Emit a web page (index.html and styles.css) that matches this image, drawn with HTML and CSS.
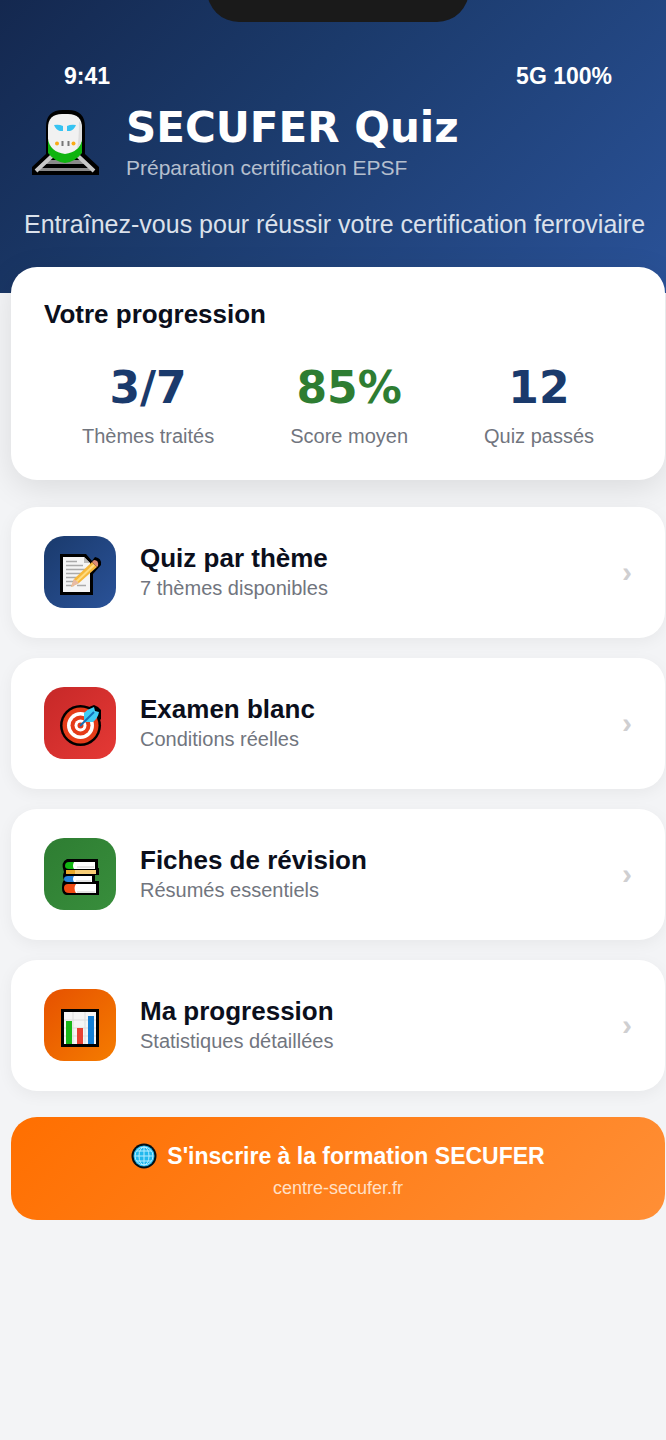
FILE: index.html
```html
<!DOCTYPE html>
<html lang="fr">
<head>
<meta charset="utf-8">
<meta name="viewport" content="width=device-width, initial-scale=1">
<title>SECUFER Quiz</title>
<link rel="stylesheet" href="styles.css">
</head>
<body>
<header class="header">
  <div class="notch"></div>
  <div class="status"><span>9:41</span><span>5G 100%</span></div>
  <div class="brand">
    <svg class="brand-icon" viewBox="0 0 68 68" aria-hidden="true">
      <path d="M0 57 14 44V17Q14 0 31 0H36Q53 0 53 17V44L67 57V65H0Z" fill="#000"/>
      <path d="M16 50H50L53 54H12ZM9 58H57L59 61H7Z" fill="#8a8a8a"/>
      <path d="M20 46 4 61M46 46 62 61" stroke="#c8c8c8" stroke-width="4"/>
      <path d="M16 30H50V43Q43 52 33 53Q23 52 16 43Z" fill="#10b410"/>
      <path d="M16 18Q16 4 30 4H36Q50 4 50 18V29Q48 42 33 44Q18 42 16 29Z" fill="#f1f1f1"/>
      <path d="M47 11Q50 14 50 18V29Q49 35 45 39Q47 30 47 11Z" fill="#ddd"/>
      <path d="M22 15Q27 14 31 16V21H28Q24 20 22 15ZM44 15Q39 14 35 16V21H38Q42 20 44 15Z" fill="#36c3f2"/>
      <circle cx="25" cy="33.500" r="2" fill="#f9ab18"/><circle cx="41.500" cy="33.500" r="2" fill="#f9ab18"/>
      <path d="M30.500 31v5M36.500 31v5" stroke="#777" stroke-width="2"/>
    </svg>
    <div>
      <h1 class="brand-title">SECUFER Quiz</h1>
      <p class="brand-subtitle">Préparation certification EPSF</p>
    </div>
  </div>
  <p class="tagline">Entraînez-vous pour réussir votre certification ferroviaire</p>
</header>
<main class="content">
  <section class="card progress">
    <h2 class="card-title">Votre progression</h2>
    <div class="stats">
      <div class="stat"><strong class="stat-value">3/7</strong><span class="small">Thèmes traités</span></div>
      <div class="stat"><strong class="stat-value good">85%</strong><span class="small">Score moyen</span></div>
      <div class="stat"><strong class="stat-value">12</strong><span class="small">Quiz passés</span></div>
    </div>
  </section>
  <nav class="menu">
    <a class="card item" href="#quiz">
      <span class="tile blue"><svg viewBox="0 0 72 72" aria-hidden="true">
        <path d="M16 18H42L48 25 51 21Q58 22 57 29L49 38V59H16Z" fill="#000"/>
        <path d="M19 21H40L46 27V56H19Z" fill="#f5f5f5"/>
        <path d="M40 21V27H46Z" fill="#bbb"/>
        <path d="M22 25.500h11M22 29.500h17M22 33.500h20M22 37.500h17M22 41.500h14M22 45.500h12M22 49.500h8M33 49.500h9" stroke="#aaa" stroke-width="1.500"/>
        <path d="M27 51 30 43 48 26 53 31 35 47Z" fill="#f6b83c"/><path d="M32 46 50 29" stroke="#ffdc80" stroke-width="2"/>
        <path d="M27 51 30 43 35 47Z" fill="#e8bba5"/><path d="M48 26 50 24Q55 24 54 30L53 31Z" fill="#dc8b73"/>
      </svg></span>
      <span class="item-text"><span class="card-title">Quiz par thème</span><span class="small">7 thèmes disponibles</span></span>
      <span class="arrow" aria-hidden="true">›</span>
    </a>
    <a class="card item" href="#examen">
      <span class="tile red"><svg viewBox="0 0 72 72" aria-hidden="true">
        <circle cx="36.500" cy="38.500" r="20.500" fill="#000"/><path d="M37 29 40 22 50 18 54 20 57 23V32L51 38 42 37Z" fill="#000"/>
        <circle cx="36.500" cy="38.500" r="18" fill="#e53b18"/><circle cx="36.500" cy="38.500" r="13.500" fill="#fff"/>
        <circle cx="36.500" cy="38.500" r="10" fill="#e53b18"/><circle cx="36.500" cy="38.500" r="6" fill="#fff"/><circle cx="36.500" cy="38.500" r="3" fill="#e53b18"/>
        <path d="M40 34V26Q44 22 50 20L51 24 55 25Q54 31 49 35H42Z" fill="#40cdf3"/><path d="M36 39 50 25" stroke="#126fb5" stroke-width="2"/>
      </svg></span>
      <span class="item-text"><span class="card-title">Examen blanc</span><span class="small">Conditions réelles</span></span>
      <span class="arrow" aria-hidden="true">›</span>
    </a>
    <a class="card item" href="#fiches">
      <span class="tile green"><svg viewBox="0 0 72 72" aria-hidden="true">
        <path d="M23 21H54V30H55V37H51V43H55V57H22Q18 56 18 50 18 44 20 42 18 38 20 34 16 24 23 21Z" fill="#000"/>
        <path d="M29 24H51V31H29ZM28 38H48V44H28ZM30 46H52V55H30Z" fill="#fff"/>
        <path d="M30 24H25Q21 24 21 28 21 31 25 31H30Q28 28 30 24Z" fill="#12b612"/>
        <path d="M23 32H52V36H23Z" fill="#f8ce76"/><path d="M22 32H31V36H22Z" fill="#e9a929"/>
        <path d="M30 38H24Q20 38 20 41 20 44 24 44H30Q28 41 30 38Z" fill="#2783da"/>
        <path d="M32 46H24Q20 46 20 50 20 55 25 55H32Q29 50 32 46Z" fill="#f04b13"/>
        <path d="M33 29H50M32 43H47M33 54H51" stroke="#ccc"/>
      </svg></span>
      <span class="item-text"><span class="card-title">Fiches de révision</span><span class="small">Résumés essentiels</span></span>
      <span class="arrow" aria-hidden="true">›</span>
    </a>
    <a class="card item" href="#progression">
      <span class="tile orange"><svg viewBox="0 0 72 72" aria-hidden="true">
        <path d="M17 20H55V58H17Z" fill="#000"/><path d="M20 23H52V55H20Z" fill="#f5f5f5"/>
        <path d="M20 31H52M20 39H52M20 47H52M29 23V55M41 23V55" stroke="#ddd"/>
        <path d="M22 32H28V55H22Z" fill="#18b818"/><path d="M33 39H39V55H33Z" fill="#e84132"/><path d="M44 27H50V55H44Z" fill="#147fd5"/>
      </svg></span>
      <span class="item-text"><span class="card-title">Ma progression</span><span class="small">Statistiques détaillées</span></span>
      <span class="arrow" aria-hidden="true">›</span>
    </a>
  </nav>
  <a class="cta" href="#inscription">
    <span class="cta-title"><svg class="globe" viewBox="0 0 26 26" aria-hidden="true">
      <circle cx="13" cy="13" r="12.500" fill="#001018"/><circle cx="13" cy="13" r="10.500" fill="#22b8ed"/>
      <g fill="none" stroke="#b4ecff"><ellipse cx="13" cy="13" rx="5" ry="9"/><circle cx="13" cy="13" r="9"/><path d="M13 4V22M4 13H22M6 8H20M6 18H20"/></g>
    </svg>S'inscrire à la formation SECUFER</span>
    <span class="cta-url">centre-secufer.fr</span>
  </a>
</main>
</body>
</html>
```

FILE: styles.css
```css
* { box-sizing: border-box; }
body {
  margin: 0;
  min-height: 100vh;
  background: #f3f4f6;
  color: #0b0f1c;
  font-family: "Liberation Sans", Arial, sans-serif;
}
h1, h2, p { margin: 0; }
a { color: inherit; text-decoration: none; }
.header {
  position: relative;
  padding: 62px 20px 54px 24px;
  background: linear-gradient(135deg, #14284f 0%, #1b3a6b 40%, #2a5298 100%);
  color: #fff;
}
.notch {
  position: absolute;
  top: -12px;
  left: 50%;
  width: 262px;
  height: 34px;
  margin-left: -126px;
  border-radius: 0 0 32px 32px;
  background: #1a1a1a;
}
.status {
  display: flex;
  justify-content: space-between;
  padding: 0 34px 0 40px;
  font-size: 23px;
  line-height: 28px;
  font-weight: bold;
}
.brand { display: flex; align-items: center; gap: 26px; margin: 14px 0 25px 8px; }
.brand-icon { width: 68px; height: 68px; }
.brand-title { font: bold 42px/48px "DejaVu Sans", sans-serif; }
.brand-subtitle { font-size: 21px; line-height: 32px; color: #b5bfce; }
.tagline { font-size: 25px; line-height: 30px; white-space: nowrap; color: #dbe1eb; }
.content { padding: 0 1px 0 11px; }
.card {
  border-radius: 26px;
  background: #fff;
  box-shadow: 0 4px 16px rgba(0, 0, 0, .05);
}
.progress {
  position: relative;
  margin-top: -26px;
  padding: 32px 33px 29px;
  box-shadow: 0 8px 32px rgba(0, 0, 0, .1);
}
.card-title { font-size: 26px; line-height: 30px; font-weight: bold; }
.small { font-size: 20px; line-height: 30px; color: #71757e; }
.stats { display: flex; justify-content: space-around; margin-top: 30px; }
.stat { display: flex; flex-direction: column; align-items: center; gap: 4px; }
.stat-value { font: bold 44px/58px "DejaVu Sans", sans-serif; color: #1a3a6c; }
.stat-value.good { color: #2e7d32; }
.menu { position: relative; display: flex; flex-direction: column; gap: 20px; margin: 27px 0 26px; }
.item { display: flex; align-items: center; gap: 24px; padding: 29px 33px 30px; }
.tile { width: 72px; height: 72px; border-radius: 20px; overflow: hidden; }
.tile svg { display: block; width: 100%; height: 100%; }
.blue { background: linear-gradient(135deg, #1a3a6c, #2a5298); }
.red { background: linear-gradient(135deg, #c62828, #e53935); }
.green { background: linear-gradient(135deg, #2e7d32, #388e3c); }
.orange { background: linear-gradient(135deg, #e65100, #f57c00); }
.item-text { display: flex; flex: 1; flex-direction: column; padding-top: 2px; }
.arrow { font-size: 30px; line-height: 36px; font-weight: bold; color: #cfcfd1; }
.cta {
  display: flex;
  flex-direction: column;
  align-items: center;
  gap: 7px;
  padding: 25px 25px 21px;
  border-radius: 26px;
  background: linear-gradient(135deg, #ff6f00, #ff8f36);
  color: #fff;
}
.cta-title { display: flex; align-items: center; gap: 10px; font-size: 23px; line-height: 28px; font-weight: bold; }
.globe { width: 26px; height: 26px; }
.cta-url { font-size: 18px; line-height: 22px; color: #ffe0c6; }
```
